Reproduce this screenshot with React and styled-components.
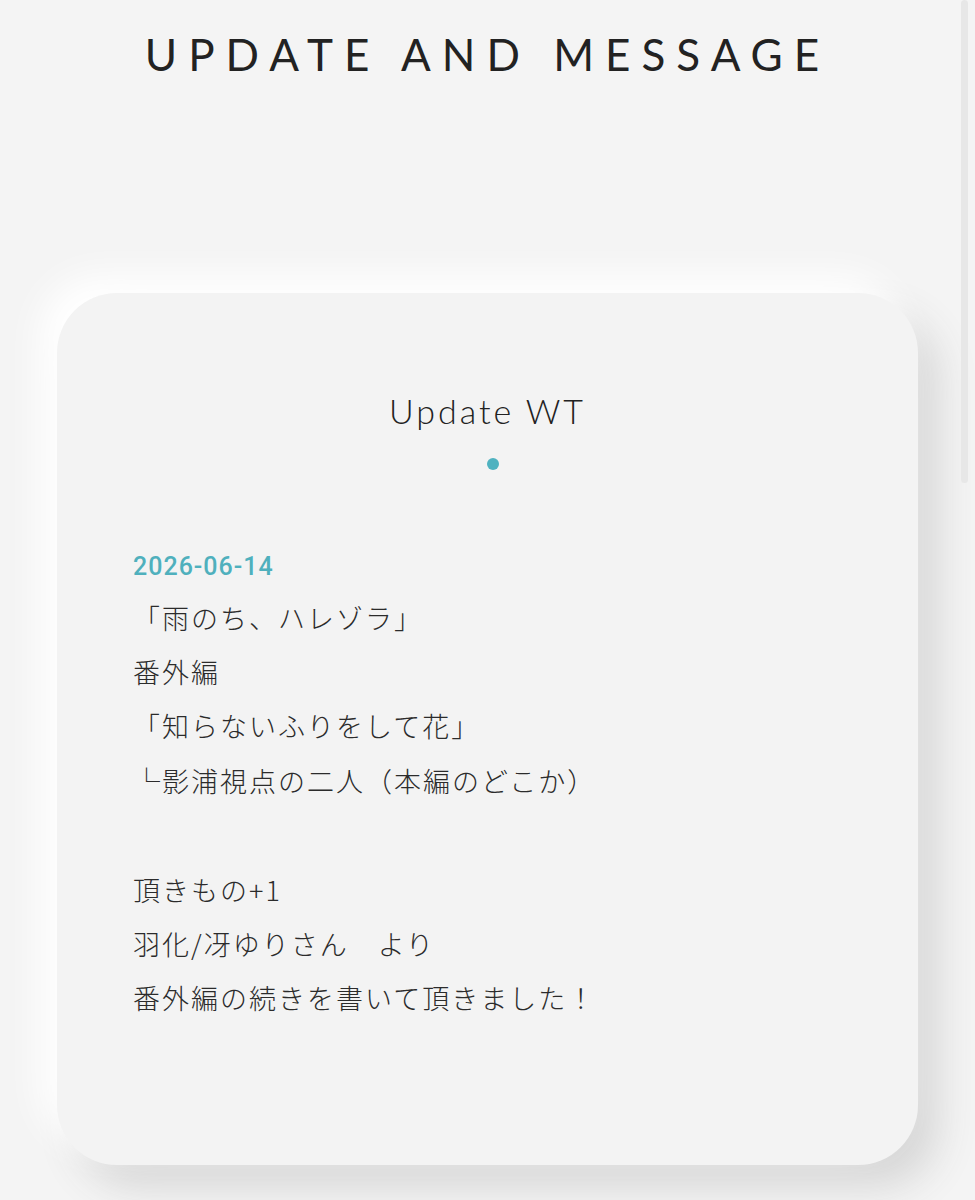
import React from "react";
import styled, { createGlobalStyle } from "styled-components";

const GlobalStyle = createGlobalStyle`
  html, body {
    margin: 0;
    padding: 0;
    background: #f4f4f4;
  }
  body {
    font-family: "Noto Sans CJK JP", "Noto Sans", sans-serif;
    color: #2b2b2b;
  }
`;

const updates = [
  {
    date: "2026-06-14",
    lines: [
      "「雨のち、ハレゾラ」",
      "番外編",
      "「知らないふりをして花」",
      "└影浦視点の二人（本編のどこか）",
      "",
      "頂きもの+1",
      "羽化/冴ゆりさん　より",
      "番外編の続きを書いて頂きました！",
    ],
  },
];

const Page = () => {
  return (
    <Wrapper>
      <GlobalStyle />
      <PageTitle>UPDATE AND MESSAGE</PageTitle>
      <Card>
        <CardTitle>Update WT</CardTitle>
        <Dot />
        {updates.map((u) => (
          <Entry key={u.date}>
            <DateLabel>{u.date}</DateLabel>
            {u.lines.map((line, i) => (
              <Line key={i}>{line || "\u00a0"}</Line>
            ))}
          </Entry>
        ))}
      </Card>
      <ScrollThumb />
    </Wrapper>
  );
};

const Wrapper = styled.div`
  min-height: 1200px;
  padding-top: 28px;
  box-sizing: border-box;
`;

const PageTitle = styled.h1`
  margin: 0;
  text-align: center;
  font-family: "Lato", "Noto Sans", sans-serif;
  font-weight: 400;
  font-size: 44px;
  line-height: 1.2;
  letter-spacing: 11px;
  color: #222;
`;

const Card = styled.section`
  margin: 212px 57px 0;
  padding: 98px 76px 139px;
  background: #f3f3f3;
  border-radius: 60px;
  box-shadow: -18px -18px 36px #ffffff, 20px 22px 40px #d6d6d6;
`;

const CardTitle = styled.h2`
  margin: 0;
  text-align: center;
  font-family: "Lato", "Noto Sans", sans-serif;
  font-weight: 300;
  font-size: 34px;
  line-height: 1.2;
  letter-spacing: 3px;
  color: #222;
`;

const Dot = styled.div`
  width: 12px;
  height: 12px;
  margin: 26px auto 0;
  border-radius: 50%;
  background: #4fb2c0;
  position: relative;
  left: 5px;
`;

const Entry = styled.div`
  margin-top: 82px;
`;

const DateLabel = styled.div`
  font-family: "Roboto", sans-serif;
  font-weight: 500;
  font-size: 25px;
  line-height: 30px;
  letter-spacing: 1px;
  color: #4fb0bd;
  margin-bottom: 9px;
`;

const Line = styled.p`
  margin: 0;
  font-family: "Noto Sans CJK JP", sans-serif;
  font-weight: 300;
  font-size: 27px;
  line-height: 54.4px;
  letter-spacing: 2px;
  color: #2b2b2b;
`;

const ScrollThumb = styled.div`
  position: fixed;
  top: 0;
  right: 7px;
  width: 7px;
  height: 483px;
  border-radius: 4px;
  background: #e7e7e7;
`;

export default Page;
